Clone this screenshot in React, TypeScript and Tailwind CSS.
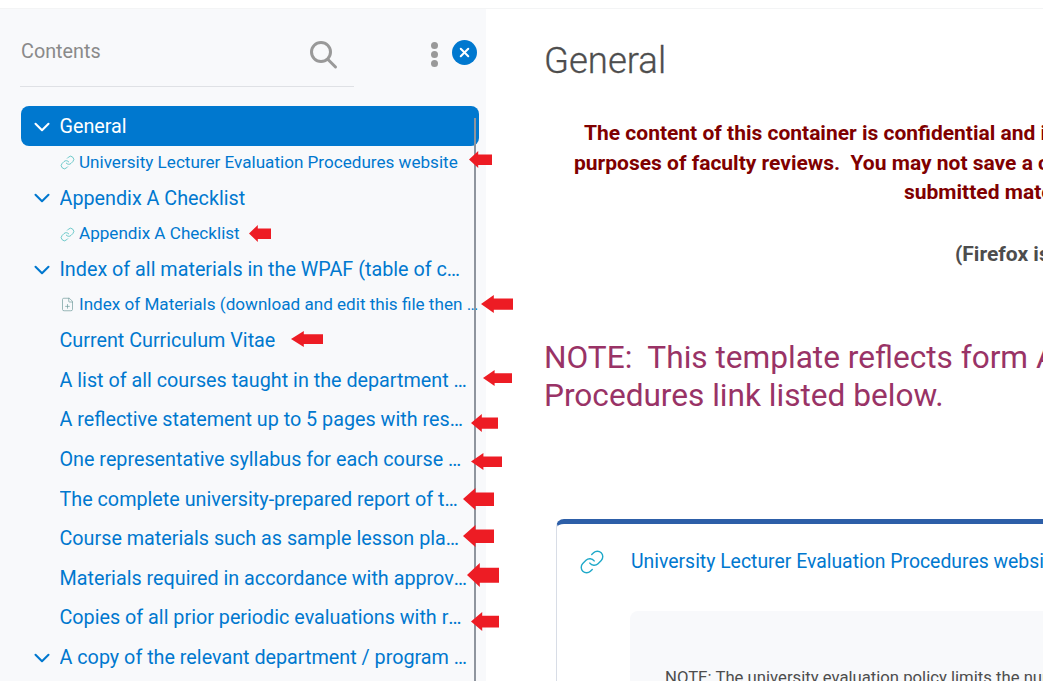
import { ChevronDown, FilePlus, Link as LinkIcon, X } from "lucide-react";

const arrows = [
  "left-[469px] top-[151px] w-[23px] h-[17px]",
  "left-[249px] top-[225px] w-[22px] h-[17px]",
  "left-[481px] top-[295px] w-[32px] h-[18px]",
  "left-[291px] top-[331px] w-[32px] h-[16px]",
  "left-[483px] top-[370px] w-[29px] h-[16px]",
  "left-[471px] top-[414px] w-[27px] h-[18px]",
  "left-[471px] top-[453px] w-[31px] h-[17px]",
  "left-[463px] top-[488px] w-[31px] h-[22px]",
  "left-[463px] top-[525px] w-[31px] h-[22px]",
  "left-[467px] top-[563px] w-[32px] h-[24px]",
  "left-[471px] top-[612px] w-[28px] h-[19px]",
];

function Arrow({ cls }: { cls: string }) {
  return (
    <svg className={"absolute " + cls} viewBox="0 0 100 100" preserveAspectRatio="none">
      <polygon points="0,50 40,0 40,20 100,20 100,82 40,82 40,100" fill="#ed1c24" />
    </svg>
  );
}

function Head({ text, chevron = false, active = false }: { text: string; chevron?: boolean; active?: boolean }) {
  return (
    <div className={"flex items-center pl-[12.5px] pt-[2px] rounded-lg " + (active ? "h-10 bg-[#0078cf] text-white" : "h-[39.6px] text-[#0078cf]")}>
      <div className="w-[26px] shrink-0">
        {chevron && <ChevronDown size={26} strokeWidth={1.9} className="-ml-[5px]" />}
      </div>
      <div className="w-[409px] truncate text-[19.75px]">{text}</div>
    </div>
  );
}

function Sub({ text, file = false }: { text: string; file?: boolean }) {
  return (
    <div className={"flex items-center h-[31.7px] pl-[39px] text-[#0078cf] " + (file ? "pt-0" : "pt-[2px]")}>
      <div className="w-[19px] shrink-0">
        {file ? (
          <FilePlus size={15} strokeWidth={1.1} className="text-[#6f9a9a]" />
        ) : (
          <LinkIcon size={15} strokeWidth={1.1} className="text-[#2fb3b3]" />
        )}
      </div>
      <div className="w-[402px] truncate text-[17.1px]">{text}</div>
    </div>
  );
}

export default function App() {
  return (
    <div className="relative h-[681px] w-[1043px] overflow-hidden bg-white font-['Roboto',sans-serif]">
      <div className="h-[9px] border-b border-[#f3f4f5]" />
      <div className="flex h-[672px]">
        <aside className="w-[486px] shrink-0 bg-[#f8f9fb]">
          <div className="ml-[20px] flex h-[78px] w-[334px] items-center border-b border-[#dfe1e5] pl-px pt-[8px]">
            <span className="text-[19.8px] text-[#8a8a8a]">Contents</span>
          </div>
          <nav className="ml-[21px] mt-[19px] w-[458px]">
            <Head text="General" chevron active />
            <Sub text="University Lecturer Evaluation Procedures website" />
            <Head text="Appendix A Checklist" chevron />
            <Sub text="Appendix A Checklist" />
            <Head text="Index of all materials in the WPAF (table of contents)" chevron />
            <Sub text="Index of Materials (download and edit this file then upload it here)" file />
            <Head text="Current Curriculum Vitae" />
            <Head text="A list of all courses taught in the department during the review period" />
            <Head text="A reflective statement up to 5 pages with respect to teaching" />
            <Head text="One representative syllabus for each course offered in the period" />
            <Head text="The complete university-prepared report of two semesters of evaluations" />
            <Head text="Course materials such as sample lesson plans and assignments" />
            <Head text="Materials required in accordance with approved criteria" />
            <Head text="Copies of all prior periodic evaluations with responses" />
            <Head text="A copy of the relevant department / program criteria and standards" chevron />
          </nav>
        </aside>
        <main className="min-w-0 flex-1 pl-[59px]">
          <h1 className="-ml-px mt-[30px] text-[36.5px] font-light leading-[44px] text-[#4d4d4d] [-webkit-text-stroke:0.3px_#4d4d4d]">General</h1>
          <div className="mt-[36px] whitespace-nowrap text-[21px] font-bold leading-[29.5px] text-[#800000]">
            <div className="pl-[39px]">The content of this container is confidential and is intended solely for the</div>
            <div className="pl-[29px]">purposes of faculty reviews.&nbsp; You may not save a copy of any of the</div>
            <div className="pl-[359px]">submitted materials</div>
          </div>
          <div className="mt-[32px] whitespace-nowrap pl-[410px] text-[21px] font-bold leading-[29.5px] text-[#4d4d4d]">(Firefox is recommended)</div>
          <div className="-ml-px mt-[70px] whitespace-nowrap text-[31.6px] leading-[38px] text-[#993366]">
            NOTE:&nbsp; This template reflects form A of the University Lecturer Evaluation
            <br />
            Procedures link listed below.
          </div>
          <section className="ml-[11px] mt-[104px] w-[700px] rounded-tl-lg border-l border-t-[5px] border-[#d8dde6] border-t-[#2d5fa8] pl-[22px] pt-[23px]">
            <div className="flex items-center">
              <LinkIcon size={26} strokeWidth={1.3} className="text-[#1fa9c9]" />
              <div className="ml-[26px] whitespace-nowrap text-[19.4px] text-[#0078cf]">University Lecturer Evaluation Procedures website</div>
            </div>
            <div className="ml-[51px] mt-[35px] h-[120px] rounded-lg bg-[#f8f9fb] pl-[35px] pt-[55px]">
              <p className="whitespace-nowrap text-[16.7px] leading-[24px] text-[#4d4d4d]">NOTE: The university evaluation policy limits the number of pages</p>
            </div>
          </section>
        </main>
      </div>

      {/* header tools */}
      <svg className="absolute left-[308px] top-[40px] h-[30px] w-[30px]" viewBox="0 0 30 30" fill="none" stroke="#999999" strokeWidth="3">
        <circle cx="13" cy="12" r="9.5" />
        <path d="M20 19.5 L27.5 27" strokeLinecap="round" />
      </svg>
      <div className="absolute left-[431px] top-[42px] flex flex-col gap-[2px]">
        <span className="h-[7px] w-[7px] rounded-full bg-[#999999]" />
        <span className="h-[7px] w-[7px] rounded-full bg-[#999999]" />
        <span className="h-[7px] w-[7px] rounded-full bg-[#999999]" />
      </div>
      <div className="absolute left-[452px] top-[40px] flex h-[25px] w-[25px] items-center justify-center rounded-full bg-[#0078cf]">
        <X size={15} strokeWidth={3.2} className="text-white" />
      </div>

      {/* scrollbar */}
      <div className="absolute left-[474px] top-[118px] h-[563px] w-[2px] bg-[#8f959e]" />

      {arrows.map((c) => (
        <Arrow key={c} cls={c} />
      ))}
    </div>
  );
}
